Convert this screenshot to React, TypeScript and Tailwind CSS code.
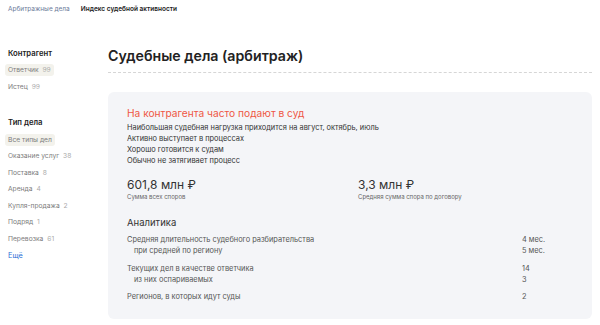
import React from 'react'

const types = [
  { name: 'Оказание услуг', count: '38' },
  { name: 'Поставка', count: '8' },
  { name: 'Аренда', count: '4' },
  { name: 'Купля-продажа', count: '2' },
  { name: 'Подряд', count: '1' },
  { name: 'Перевозка', count: '61' },
]

const App = () => {
  return (
    <div className="w-[600px] h-[325px] bg-white text-[#222] overflow-hidden" style={{ fontFamily: 'Inter, "Noto Sans", sans-serif' }}>
      <div className="flex gap-[11px] px-[8px] pt-[4px] h-[16px] items-center text-[6.5px]">
        <span className="text-[#6b7a99]">Арбитражные дела</span>
        <span className="font-semibold text-[#222]">Индекс судебной активности</span>
      </div>
      <div className="flex">
        <aside className="w-[108px] shrink-0 pl-[8px] pt-[33px]">
          <div className="text-[7.7px] leading-[10px] font-semibold mb-[5px]">Контрагент</div>
          <div className="flex flex-col items-start gap-[4.5px] text-[6.7px] leading-[12px] text-[#7d7d7d]">
            <span className="bg-[#f3f2ec] rounded-[3px] -ml-[3px] px-[3px]">Ответчик <span className="ml-[2px] text-[#aaa]">99</span></span>
            <span>Истец <span className="ml-[2px] text-[#aaa]">99</span></span>
          </div>
          <div className="text-[7.7px] leading-[10px] font-semibold mt-[25px] mb-[6px]">Тип дела</div>
          <div className="flex flex-col items-start gap-[4.5px] text-[6.7px] leading-[12px] text-[#7d7d7d]">
            <span className="bg-[#f3f2ec] rounded-[3px] -ml-[3px] px-[3px]">Все типы дел</span>
            {types.map((t) => (
              <span key={t.name}>
                {t.name} <span className="ml-[2px] text-[#aaa]">{t.count}</span>
              </span>
            ))}
            <span className="mt-[1px] text-[#2a6fd6] text-[7.3px]">Ещё</span>
          </div>
        </aside>
        <main className="flex-1 pr-[8px] pt-[30px]">
          <h1 className="text-[14.2px] font-semibold leading-[20px] text-[#222]">Судебные дела (арбитраж)</h1>
          <div className="mt-[6px] border-t border-dashed border-[#d6d6d6]" />
          <div className="mt-[19px] bg-[#f4f5f8] rounded-[6px] px-[19px] pt-[14px] pb-[17px]">
            <div className="text-[10.2px] text-[#ef5544] leading-[14px]">На контрагента часто подают в суд</div>
            <div className="mt-[2px] text-[7.4px] leading-[11px] text-[#333]">
              <div>Наибольшая судебная нагрузка приходится на август, октябрь, июль</div>
              <div>Активно выступает в процессах</div>
              <div>Хорошо готовится к судам</div>
              <div>Обычно не затягивает процесс</div>
            </div>
            <div className="mt-[11px] grid grid-cols-2">
              <div>
                <div className="text-[12px] leading-[16px] text-[#333]">601,8 млн ₽</div>
                <div className="text-[6px] text-[#666] leading-[8px]">Сумма всех споров</div>
              </div>
              <div className="pl-[8px]">
                <div className="text-[12px] leading-[16px] text-[#333]">3,3 млн ₽</div>
                <div className="text-[6px] text-[#666] leading-[8px]">Средняя сумма спора по договору</div>
              </div>
            </div>
            <div className="mt-[14.5px] text-[9.5px] leading-[13px] text-[#333]">Аналитика</div>
            <div className="mt-[5px] text-[7.4px] leading-[11px] text-[#555]">
              <div className="flex justify-between pr-[21px]">
                <span>Средняя длительность судебного разбирательства</span><span className="w-[30px]">4 мес.</span>
              </div>
              <div className="flex justify-between pr-[21px]">
                <span className="pl-[7px]">при средней по региону</span><span className="w-[30px]">5 мес.</span>
              </div>
              <div className="flex justify-between pr-[21px] mt-[7px]">
                <span>Текущих дел в качестве ответчика</span><span className="w-[30px]">14</span>
              </div>
              <div className="flex justify-between pr-[21px]">
                <span className="pl-[7px]">из них оспариваемых</span><span className="w-[30px]">3</span>
              </div>
              <div className="flex justify-between pr-[21px] mt-[6px]">
                <span>Регионов, в которых идут суды</span><span className="w-[30px]">2</span>
              </div>
            </div>
          </div>
        </main>
      </div>
    </div>
  )
}

export default App
